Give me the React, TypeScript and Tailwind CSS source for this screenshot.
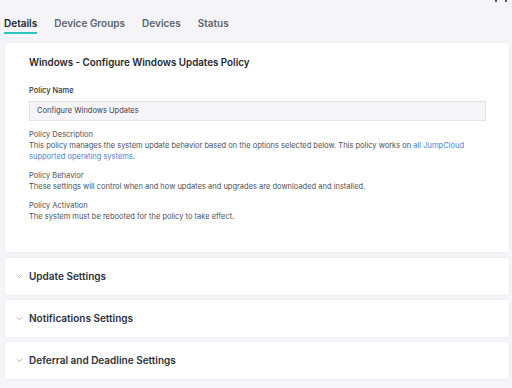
import React from "react";
import { ChevronDown } from "lucide-react";

const tabs = ["Details", "Device Groups", "Devices", "Status"];

const sections = [
  "Update Settings",
  "Notifications Settings",
  "Deferral and Deadline Settings",
];

const App: React.FC = () => {
  return (
    <div
      className="relative w-[512px] h-[388px] overflow-hidden bg-[#f5f5f9] text-[#2b323b]"
      style={{ fontFamily: "Inter, 'Noto Sans', sans-serif" }}
    >
      {/* top-right cut-off icon */}
      <div className="absolute top-0 right-[5px] flex gap-[8px]">
        <span className="w-[2px] h-[2px] rounded-full bg-[#222]" />
        <span className="w-[2px] h-[2px] rounded-full bg-[#222]" />
      </div>

      {/* Tabs */}
      <div className="flex gap-[17px] pl-[4px] pt-[17px] h-[43px]">
        {tabs.map((tab, i) => (
          <div key={tab} className="flex flex-col">
            <span
              className={`text-[10px] leading-[13px] font-semibold ${
                i === 0 ? "text-[#1f2630]" : "text-[#5b636d]"
              }`}
            >
              {tab}
            </span>
            {i === 0 && <span className="mt-[2px] h-[2px] bg-[#2cc7bb]" />}
          </div>
        ))}
      </div>

      {/* Details card */}
      <div className="ml-[5px] w-[504px] h-[209px] bg-white rounded-[2px] shadow-[0_0_2px_rgba(0,0,0,0.08)] pl-[24px] pr-[23px] pt-[13px]">
        <h1 className="text-[9.8px] leading-[13px] font-semibold text-[#1f2630]">
          Windows - Configure Windows Updates Policy
        </h1>
        <div className="mt-[17px] text-[7.5px] leading-[10px] font-medium text-[#2b323b]">
          Policy Name
        </div>
        <div className="mt-[5px] h-[20px] bg-[#f5f5f9] border border-[#e1e3e7] flex items-center px-[7px] text-[7.5px] text-[#3a414a]">
          Configure Windows Updates
        </div>
        <div className="mt-[8px] text-[7.5px] leading-[11px] text-[#4a5058]">
          <div>Policy Description</div>
          <div>
            This policy manages the system update behavior based on the options selected below. This policy works on{" "}
            <span className="text-[#4b7fd6]">all JumpCloud supported operating systems</span>.
          </div>
          <div className="mt-[8px]">Policy Behavior</div>
          <div>These settings will control when and how updates and upgrades are downloaded and installed.</div>
          <div className="mt-[8px]">Policy Activation</div>
          <div>The system must be rebooted for the policy to take effect.</div>
        </div>
      </div>

      {/* Collapsed sections */}
      <div className="mt-[6px] ml-[5px] w-[504px] flex flex-col gap-[5px]">
        {sections.map((s) => (
          <div
            key={s}
            className="h-[37px] bg-white rounded-[2px] shadow-[0_0_2px_rgba(0,0,0,0.08)] flex items-center pl-[10px]"
          >
            <ChevronDown className="w-[9px] h-[9px] text-[#858b93]" strokeWidth={1.75} />
            <span className="ml-[5px] text-[10px] font-semibold text-[#2b323b]">{s}</span>
          </div>
        ))}
      </div>
    </div>
  );
};

export default App;
